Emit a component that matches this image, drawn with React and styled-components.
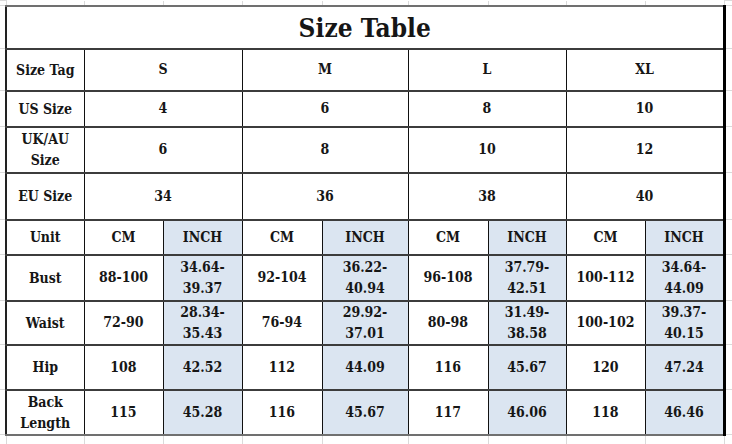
import styled, { createGlobalStyle } from "styled-components"

const GlobalStyle = createGlobalStyle`
  html, body {
    margin: 0;
    padding: 0;
    background: #fff;
  }
  body {
    font-family: "DejaVu Serif Condensed", "DejaVu Serif", serif;
    font-stretch: condensed;
    color: #161616;
  }
`

const Sheet = styled.div`
  width: 732px;
  height: 444px;
  overflow: hidden;
`

const Table = styled.table`
  border-collapse: collapse;
  table-layout: fixed;
  width: 732px;
`

const Row = styled.tr`
  height: ${(p) => p.$h}px;
`

const Cell = styled.td`
  padding: 0;
  text-align: center;
  vertical-align: middle;
  font-weight: bold;
  font-size: 14px;
  line-height: 21px;
  background: ${(p) => (p.$fill ? "#dbe5f1" : "#fff")};
  border-left: 1px solid #111;
  border-right: 1px solid #111;
  border-top: 2px solid ${(p) => (p.$edge === "top" ? "#707070" : "#3c3c3c")};
  border-bottom: 2px solid ${(p) => (p.$edge === "bottom" ? "#707070" : "#3c3c3c")};
  &:nth-child(2) {
    border-left: 2px solid #222;
  }
  &:nth-last-child(2) {
    border-right: 3px solid #000;
  }
`

const Label = styled(Cell)`
  padding-top: 1px;
`

const TitleCell = styled(Cell)`
  font-size: 26px;
  line-height: 30px;
  padding-top: 2px;
`

// faint spreadsheet gridlines round the table
const Ghost = styled.td`
  padding: 0;
  font-size: 0;
  border-top: ${(p) => (p.$side ? "1px solid #dadada" : "none")};
  border-bottom: ${(p) => (p.$side ? "1px solid #dadada" : "none")};
  border-left: ${(p) => (p.$side ? "none" : "1px solid #dadada")};
  border-right: ${(p) => (p.$side ? "none" : "1px solid #dadada")};
`

const widths = [6, 78, 79, 79, 80, 86, 80, 78, 79, 79, 8]

const sizeRows = [
  { label: "Size Tag", values: ["S", "M", "L", "XL"], h: 42 },
  { label: "US Size", values: ["4", "6", "8", "10"], h: 36 },
  { label: ["UK/AU", "Size"], values: ["6", "8", "10", "12"], h: 46 },
  { label: "EU Size", values: ["34", "36", "38", "40"], h: 47 },
]

const measureRows = [
  {
    label: "Bust",
    h: 46,
    values: ["88-100", "34.64-39.37", "92-104", "36.22-40.94", "96-108", "37.79-42.51", "100-112", "34.64-44.09"],
  },
  {
    label: "Waist",
    h: 44,
    values: ["72-90", "28.34-35.43", "76-94", "29.92-37.01", "80-98", "31.49-38.58", "100-102", "39.37-40.15"],
  },
  {
    label: "Hip",
    h: 45,
    values: ["108", "42.52", "112", "44.09", "116", "45.67", "120", "47.24"],
  },
  {
    label: ["Back", "Length"],
    h: 44,
    values: ["115", "45.28", "116", "45.67", "117", "46.06", "118", "46.46"],
  },
]

const Lines = ({ text }) =>
  Array.isArray(text) ? (
    <>
      {text[0]}
      <br />
      {text[1]}
    </>
  ) : (
    text
  )

// inch ranges break after the dash
const inchText = (v) => {
  const i = v.indexOf("-")
  return i === -1 ? v : [v.slice(0, i + 1), v.slice(i + 1)]
}

const GhostRow = ({ h }) => (
  <Row $h={h}>
    <Ghost $side />
    {widths.slice(1, -1).map((_, i) => (
      <Ghost key={i} />
    ))}
    <Ghost $side />
  </Row>
)

export default function App() {
  return (
    <Sheet>
      <GlobalStyle />
      <Table>
        <colgroup>
          {widths.map((w, i) => (
            <col key={i} style={{ width: w }} />
          ))}
        </colgroup>
        <tbody>
          <GhostRow h={5} />
          <Row $h={43}>
            <Ghost $side />
            <TitleCell colSpan={9} $edge="top">Size Table</TitleCell>
            <Ghost $side />
          </Row>
          {sizeRows.map((r, i) => (
            <Row key={i} $h={r.h}>
              <Ghost $side />
              <Label>
                <Lines text={r.label} />
              </Label>
              {r.values.map((v) => (
                <Cell key={v} colSpan={2}>
                  {v}
                </Cell>
              ))}
              <Ghost $side />
            </Row>
          ))}
          <Row $h={35}>
            <Ghost $side />
            <Label>Unit</Label>
            {[0, 1, 2, 3].map((i) => [
              <Cell key={"c" + i}>CM</Cell>,
              <Cell key={"i" + i} $fill>
                INCH
              </Cell>,
            ])}
            <Ghost $side />
          </Row>
          {measureRows.map((r, ri) => (
            <Row key={ri} $h={r.h}>
              <Ghost $side />
              <Label $edge={ri === measureRows.length - 1 ? "bottom" : undefined}>
                <Lines text={r.label} />
              </Label>
              {r.values.map((v, i) => (
                <Cell
                  key={i}
                  $fill={i % 2 === 1}
                  $edge={ri === measureRows.length - 1 ? "bottom" : undefined}
                >
                  <Lines text={i % 2 === 1 ? inchText(v) : v} />
                </Cell>
              ))}
              <Ghost $side />
            </Row>
          ))}
          <GhostRow h={11} />
        </tbody>
      </Table>
    </Sheet>
  )
}
